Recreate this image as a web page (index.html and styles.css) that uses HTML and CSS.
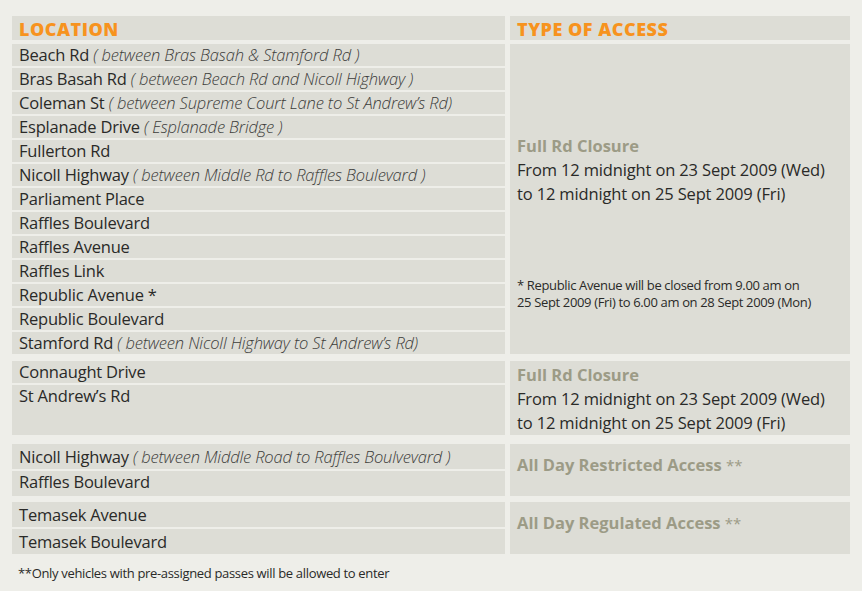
FILE: index.html
```html
<!DOCTYPE html>
<html>
<head>
<meta charset="utf-8">
<link rel="stylesheet" href="styles.css">
</head>
<body>
<div class="page">
  <div class="head">
    <div class="cell hcell">LOCATION</div>
    <div class="cell hcell">TYPE OF ACCESS</div>
  </div>

  <div class="group g1">
    <div class="rows">
      <div class="row">Beach Rd <em>( between Bras Basah &amp; Stamford Rd )</em></div>
      <div class="row">Bras Basah Rd <em>( between Beach Rd and Nicoll Highway )</em></div>
      <div class="row">Coleman St <em>( between Supreme Court Lane to St Andrew’s Rd)</em></div>
      <div class="row">Esplanade Drive <em>( Esplanade Bridge )</em></div>
      <div class="row">Fullerton Rd</div>
      <div class="row">Nicoll Highway <em>( between Middle Rd to Raffles Boulevard )</em></div>
      <div class="row">Parliament Place</div>
      <div class="row">Raffles Boulevard</div>
      <div class="row">Raffles Avenue</div>
      <div class="row">Raffles Link</div>
      <div class="row">Republic Avenue *</div>
      <div class="row">Republic Boulevard</div>
      <div class="row">Stamford Rd <em>( between Nicoll Highway to St Andrew’s Rd)</em></div>
    </div>
    <div class="cell access a1">
      <div class="kind">Full Rd Closure</div>
      <div>From 12 midnight on 23 Sept 2009 (Wed)</div>
      <div>to 12 midnight on 25 Sept 2009 (Fri)</div>
      <p class="note">* Republic Avenue will be closed from 9.00 am on<br>25 Sept 2009 (Fri) to 6.00 am on 28 Sept 2009 (Mon)</p>
    </div>
  </div>

  <div class="group g2">
    <div class="rows">
      <div class="row">Connaught Drive</div>
      <div class="row grow">St Andrew’s Rd</div>
    </div>
    <div class="cell access a2">
      <div class="kind">Full Rd Closure</div>
      <div>From 12 midnight on 23 Sept 2009 (Wed)</div>
      <div>to 12 midnight on 25 Sept 2009 (Fri)</div>
    </div>
  </div>

  <div class="group g3">
    <div class="rows">
      <div class="row tall">Nicoll Highway <em>( between Middle Road to Raffles Boulvevard )</em></div>
      <div class="row tall">Raffles Boulevard</div>
    </div>
    <div class="cell access a3">
      <div class="kind">All Day Restricted Access <span class="stars">**</span></div>
    </div>
  </div>

  <div class="group g4">
    <div class="rows">
      <div class="row tall">Temasek Avenue</div>
      <div class="row tall">Temasek Boulevard</div>
    </div>
    <div class="cell access a4">
      <div class="kind">All Day Regulated Access <span class="stars">**</span></div>
    </div>
  </div>

  <p class="foot">**Only vehicles with pre-assigned passes will be allowed to enter</p>
</div>
</body>
</html>
```

FILE: styles.css
```css
* { box-sizing: border-box; }

body {
  margin: 0;
  background: #eeeee9;
  font-family: "Open Sans", Lato, sans-serif;
  color: #2a2a28;
}

.page {
  padding: 16px 12px 0 12px;
}

.head,
.group {
  display: grid;
  grid-template-columns: 493px 340px;
  column-gap: 5px;
}

.head { margin-bottom: 4px; }

.cell { background: #ddddd6; }

.hcell {
  height: 24px;
  line-height: 26px;
  padding-left: 7px;
  font-weight: 800;
  font-size: 18px;
  color: #f7931e;
  letter-spacing: 0.5px;
}

.rows {
  display: flex;
  flex-direction: column;
  gap: 2px;
}

.row {
  background: #ddddd6;
  height: 22px;
  line-height: 22px;
  padding-left: 7px;
  font-size: 16.5px;
  letter-spacing: -0.2px;
  white-space: nowrap;
}

.row.grow { flex: 1; height: auto; }
.row.tall { height: 25px; line-height: 25px; }
.g3 .row.tall + .row.tall { line-height: 21px; }

.row em {
  font-style: italic;
  font-weight: 300;
  color: #3c3c3a;
  letter-spacing: -0.15px;
}

.access {
  padding-left: 7px;
  font-size: 16.5px;
  line-height: 24px;
  letter-spacing: -0.15px;
}

.kind {
  font-weight: 700;
  color: #9c9b86;
  letter-spacing: 0;
}

.stars { font-weight: 400; font-size: 15px; }

.a1 { padding-top: 90px; }
.a2 { padding-top: 2px; }
.a3 { padding-top: 9px; }
.a4 { padding-top: 9px; }

.g2 { margin-top: 7px; }
.g3 { margin-top: 9px; }
.g4 { margin-top: 6px; }

.note {
  margin: 71px 0 0 0;
  font-size: 13px;
  line-height: 17px;
  letter-spacing: -0.35px;
}

.foot {
  margin: 9px 0 0 6px;
  font-size: 13px;
  line-height: 20px;
  letter-spacing: -0.33px;
}
```
